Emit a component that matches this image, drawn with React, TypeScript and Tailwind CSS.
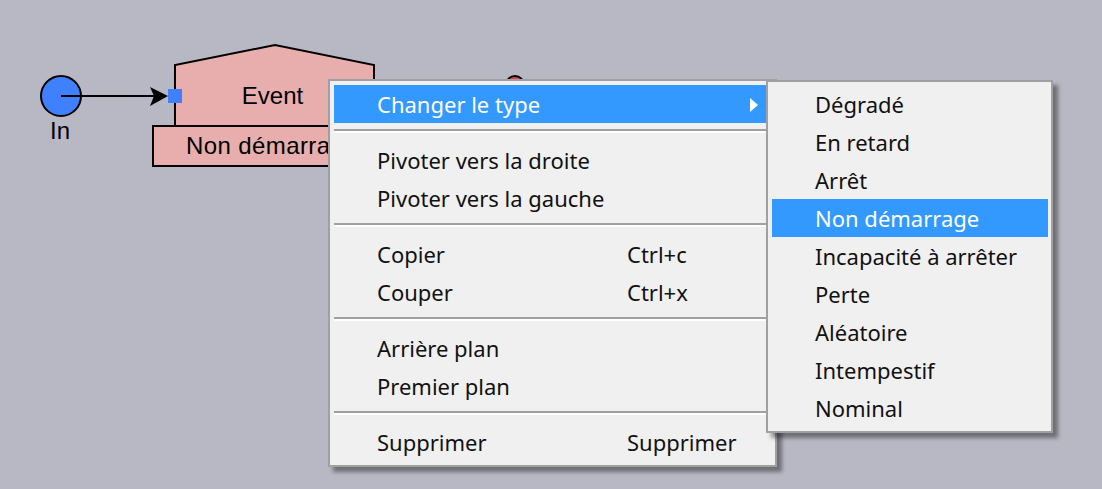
import React from "react";

const font = { fontFamily: '"Noto Sans", "Open Sans", sans-serif' };

function Sep() {
  return (
    <div className="mt-[6px] mb-[8px] flex flex-col">
      <div className="h-[2px] bg-[#a0a0a0]" />
      <div className="h-[2px] bg-white" />
    </div>
  );
}

function Item({ label, shortcut, active, arrow }: { label: string; shortcut?: string; active?: boolean; arrow?: boolean }) {
  return (
    <div className={`flex h-[38px] items-center pt-[1px] ${active ? "bg-[#3399ff] text-white" : "text-[#111]"}`}>
      <span className="w-[293px] shrink-0 pl-[43px] whitespace-nowrap">{label}</span>
      {shortcut && <span className="whitespace-nowrap">{shortcut}</span>}
      {arrow && (
        <svg className="ml-auto mr-[13px]" width="8" height="14" viewBox="0 0 8 14">
          <polygon points="0,0 8,7 0,14" fill="#ffffff" />
        </svg>
      )}
    </div>
  );
}

function SubItem({ label, active }: { label: string; active?: boolean }) {
  return (
    <div className={`flex h-[38px] items-center pl-[43px] pt-[1px] whitespace-nowrap ${active ? "bg-[#3399ff] text-white" : "text-[#111]"}`}>
      {label}
    </div>
  );
}

export default function App() {
  return (
    <div className="relative h-[489px] w-[1102px] overflow-hidden bg-[#b8b8c4]">
      {/* Diagram canvas */}
      <svg className="absolute left-0 top-0" width="1102" height="489" viewBox="0 0 1102 489">
        <polygon points="175,126 175,65 275,45 374,65 374,126" fill="#e8aeae" stroke="#000" strokeWidth="2" />
        <rect x="153" y="126" width="240" height="40" fill="#e8aeae" stroke="#000" strokeWidth="2" />
        <circle cx="515" cy="85" r="9" fill="#e0405a" stroke="#000" strokeWidth="2" />
        <circle cx="61" cy="96" r="20" fill="#3f80ff" stroke="#000" strokeWidth="2" />
        <line x1="61" y1="96" x2="156" y2="96" stroke="#000" strokeWidth="2" />
        <polygon points="150,87 168,96 150,106 154,96" fill="#000" />
        <rect x="168" y="89" width="14" height="14" fill="#3f80ff" />
      </svg>
      <div className="absolute left-[50px] top-[117px] text-[24px] leading-[28px] text-black" style={{ fontFamily: '"Liberation Sans", Arial, sans-serif' }}>
        In
      </div>
      <div className="absolute left-[173px] top-[82px] w-[199px] text-center text-[24px] leading-[28px] text-black" style={{ fontFamily: '"Liberation Sans", Arial, sans-serif' }}>
        Event
      </div>
      <div className="absolute left-[186px] top-[132px] text-[24px] leading-[28px] tracking-[0.4px] text-black whitespace-nowrap" style={{ fontFamily: '"Liberation Sans", Arial, sans-serif' }}>
        Non démarrage
      </div>

      {/* Main context menu */}
      <div
        className="absolute left-[328px] top-[79px] w-[449px] border-2 border-[#a0a0a0] bg-[#f0f0f0] p-[4px] text-[22px] shadow-[5px_5px_4px_rgba(0,0,0,0.4)]"
        style={font}
      >
        <Item label="Changer le type" active arrow />
        <Sep />
        <Item label="Pivoter vers la droite" />
        <Item label="Pivoter vers la gauche" />
        <Sep />
        <Item label="Copier" shortcut="Ctrl+c" />
        <Item label="Couper" shortcut="Ctrl+x" />
        <Sep />
        <Item label="Arrière plan" />
        <Item label="Premier plan" />
        <Sep />
        <Item label="Supprimer" shortcut="Supprimer" />
      </div>

      {/* Submenu */}
      <div
        className="absolute left-[766px] top-[80px] w-[287px] border-2 border-[#a0a0a0] bg-[#f0f0f0] pb-[4px] pl-[4px] pr-[3px] pt-[3px] text-[22px] shadow-[5px_5px_4px_rgba(0,0,0,0.4)]"
        style={font}
      >
        <SubItem label="Dégradé" />
        <SubItem label="En retard" />
        <SubItem label="Arrêt" />
        <SubItem label="Non démarrage" active />
        <SubItem label="Incapacité à arrêter" />
        <SubItem label="Perte" />
        <SubItem label="Aléatoire" />
        <SubItem label="Intempestif" />
        <SubItem label="Nominal" />
      </div>
    </div>
  );
}
